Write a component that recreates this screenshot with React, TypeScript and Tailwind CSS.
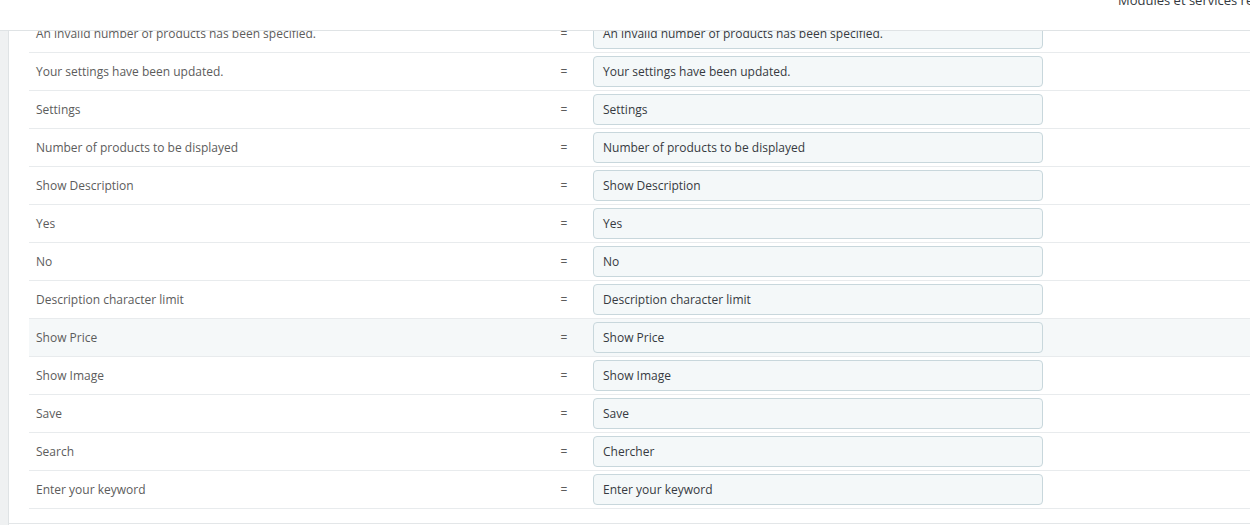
import React from "react";

const rows: [string, string][] = [
  ["An invalid number of products has been specified.", "An invalid number of products has been specified."],
  ["Your settings have been updated.", "Your settings have been updated."],
  ["Settings", "Settings"],
  ["Number of products to be displayed", "Number of products to be displayed"],
  ["Show Description", "Show Description"],
  ["Yes", "Yes"],
  ["No", "No"],
  ["Description character limit", "Description character limit"],
  ["Show Price", "Show Price"],
  ["Show Image", "Show Image"],
  ["Save", "Save"],
  ["Search", "Chercher"],
  ["Enter your keyword", "Enter your keyword"],
];

export default function App() {
  return (
    <div
      className="w-[1250px] h-[525px] overflow-hidden bg-white flex flex-col"
      style={{ fontFamily: '"Open Sans", "Liberation Sans", sans-serif' }}
    >
      <div className="h-[31px] shrink-0 border-b border-[#dfe3e5] bg-white flex justify-end overflow-hidden">
        <div className="mt-[-9px] w-[132px] text-[13px] leading-[18px] text-[#363a41] whitespace-nowrap overflow-hidden">
          Modules et services recommandés
        </div>
      </div>
      <div className="flex flex-1 min-h-0">
        <div className="w-[9px] shrink-0 bg-[#eff1f2] border-r border-[#dfe3e5]" />
        <div className="flex-1 min-w-0 overflow-hidden">
          <div className="h-[493px] border-b border-[#e3e6e8] overflow-hidden pl-[20px]">
            <div className="mt-[-16px]">
              {rows.map(([label, value], i) => (
                <div
                  key={i}
                  className={
                    "flex items-center h-[38px] border-b border-[#e8ebed] " +
                    (label === "Show Price" ? "bg-[#f5f8f9]" : "bg-white")
                  }
                >
                  <div className="w-[510px] shrink-0 pl-[7px] text-[12px] text-[#5c5c5c] whitespace-nowrap">
                    {label}
                  </div>
                  <div className="w-[50px] shrink-0 text-center text-[12px] text-[#5c5c5c]">=</div>
                  <div className="w-[454px] shrink-0 pl-[4px]">
                    <div className="h-[31px] rounded-[4px] border border-[#c8d7dc] bg-[#f4f8f9] flex items-center pl-[9px] text-[12px] text-[#363a41] whitespace-nowrap overflow-hidden">
                      {value}
                    </div>
                  </div>
                  <div className="flex-1" />
                </div>
              ))}
            </div>
          </div>
        </div>
      </div>
    </div>
  );
}
